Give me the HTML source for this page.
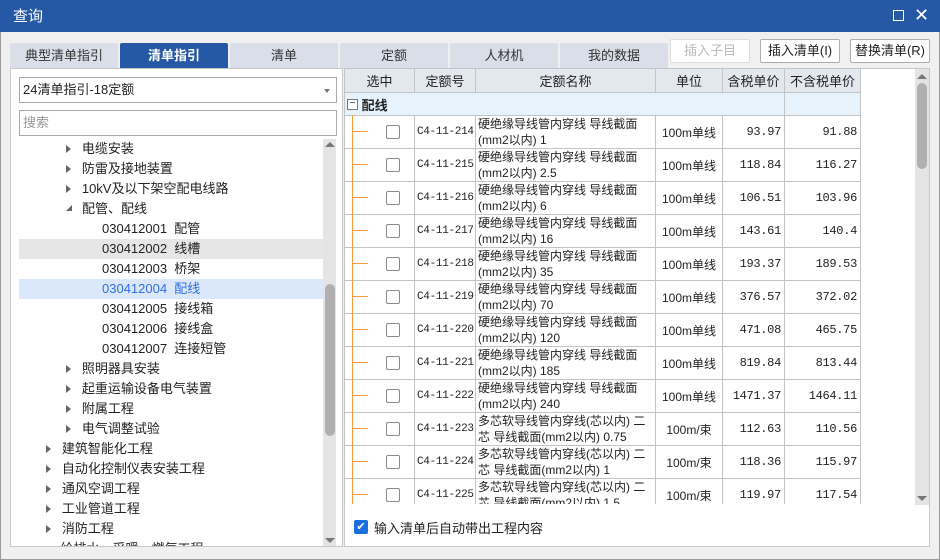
<!DOCTYPE html>
<html><head><meta charset="utf-8"><style>
*{margin:0;padding:0;box-sizing:border-box}
body{width:940px;height:560px;overflow:hidden;background:#f0f0f0;font-family:"Liberation Sans","Noto Sans CJK SC",sans-serif;font-size:13px;color:#222;position:relative}
.a{position:absolute}
.title{left:0;top:0;width:940px;height:32px;background:#2559a5;color:#fff;font-size:15px;line-height:34px;padding-left:13px}
.win{left:0;top:0;width:940px;height:560px;border:1px solid #9a9a9a}
.tab{top:43px;height:25px;width:108px;background:#d9dee8;text-align:center;line-height:26px;font-size:13px;color:#333;border-radius:2px 2px 0 0}
.tab.on{background:#2559a5;color:#fff;font-weight:bold}
.btn{top:39px;height:24px;background:#fff;border:1px solid #adadad;border-radius:2px;text-align:center;line-height:22px;font-size:13px;width:80px}
.tr{left:20px;width:303px;height:20px;line-height:20px;font-size:13px;white-space:nowrap}
.arr{display:inline-block;width:0;height:0;border-left:5px solid #666;border-top:4px solid transparent;border-bottom:4px solid transparent;vertical-align:middle;margin-top:-2px}
.mono{font-family:"Liberation Mono","Noto Sans CJK SC",monospace;font-size:11px;letter-spacing:-0.3px}
table{border-collapse:collapse;font-size:12px;table-layout:fixed}
td{border:1px solid #c4c4c4;height:33px;overflow:hidden;white-space:nowrap}
th{border:1px solid #c4c4c4;height:24px;background:#e3e8ef;font-weight:normal;font-size:13px}
.nm{line-height:16px;padding-left:2px;white-space:nowrap;vertical-align:middle}
.r{text-align:right;padding-right:3px}
.c{text-align:center}
.cb{display:inline-block;width:14px;height:14px;border:1px solid #8a8a8a;border-radius:2px;background:#fff}
</style></head><body>
<div class="a win"></div>
<div class="a title">查询</div>
<div class="a" style="left:893px;top:10px;width:11px;height:11px;border:1.5px solid #fff"></div>
<div class="a" style="left:914px;top:4px;color:#fff;font-size:18px;line-height:22px">✕</div>

<div class="a tab" style="left:10px">典型清单指引</div>
<div class="a tab on" style="left:120px">清单指引</div>
<div class="a tab" style="left:230px">清单</div>
<div class="a tab" style="left:340px">定额</div>
<div class="a tab" style="left:450px">人材机</div>
<div class="a tab" style="left:560px">我的数据</div>
<div class="a btn" style="left:670px;color:#bbb;border-color:#ddd">插入子目</div>
<div class="a btn" style="left:760px">插入清单(I)</div>
<div class="a btn" style="left:850px">替换清单(R)</div>

<!-- left panel -->
<div class="a" style="left:10px;top:68px;width:333px;height:479px;background:#fff;border:1px solid #c8c8c8"></div>
<div class="a" style="left:19px;top:77px;width:318px;height:26px;border:1px solid #a8a8a8;background:#fff;line-height:24px;padding-left:3px">24清单指引-18定额<span class="a" style="right:6px;top:11px;border-top:4px solid #777;border-left:3px solid transparent;border-right:3px solid transparent"></span></div>
<div class="a" style="left:19px;top:110px;width:318px;height:26px;border:1px solid #a8a8a8;background:#fff;line-height:24px;padding-left:3px;color:#999">搜索</div>
<div class="a" style="left:19px;top:239px;width:304px;height:20px;background:#e6e6e6"></div>
<div class="a" style="left:19px;top:279px;width:304px;height:20px;background:#dbe8fb"></div>
<div class="a tr" style="top:139px;padding-left:46px"><span class="arr"></span>&nbsp;&nbsp;&nbsp;电缆安装</div>
<div class="a tr" style="top:159px;padding-left:46px"><span class="arr"></span>&nbsp;&nbsp;&nbsp;防雷及接地装置</div>
<div class="a tr" style="top:179px;padding-left:46px"><span class="arr"></span>&nbsp;&nbsp;&nbsp;10kV及以下架空配电线路</div>
<div class="a tr" style="top:199px;padding-left:46px"><span class="a" style="left:46px;top:6px;border-right:6px solid #666;border-top:6px solid transparent"></span><span style="padding-left:16px">配管、配线</span></div>
<div class="a tr" style="top:219px;padding-left:82px">030412001&nbsp;&nbsp;配管</div>
<div class="a tr" style="top:239px;padding-left:82px">030412002&nbsp;&nbsp;线槽</div>
<div class="a tr" style="top:259px;padding-left:82px">030412003&nbsp;&nbsp;桥架</div>
<div class="a tr" style="top:279px;padding-left:82px;color:#2f6fe0">030412004&nbsp;&nbsp;配线</div>
<div class="a tr" style="top:299px;padding-left:82px">030412005&nbsp;&nbsp;接线箱</div>
<div class="a tr" style="top:319px;padding-left:82px">030412006&nbsp;&nbsp;接线盒</div>
<div class="a tr" style="top:339px;padding-left:82px">030412007&nbsp;&nbsp;连接短管</div>
<div class="a tr" style="top:359px;padding-left:46px"><span class="arr"></span>&nbsp;&nbsp;&nbsp;照明器具安装</div>
<div class="a tr" style="top:379px;padding-left:46px"><span class="arr"></span>&nbsp;&nbsp;&nbsp;起重运输设备电气装置</div>
<div class="a tr" style="top:399px;padding-left:46px"><span class="arr"></span>&nbsp;&nbsp;&nbsp;附属工程</div>
<div class="a tr" style="top:419px;padding-left:46px"><span class="arr"></span>&nbsp;&nbsp;&nbsp;电气调整试验</div>
<div class="a tr" style="top:439px;padding-left:26px"><span class="arr"></span>&nbsp;&nbsp;&nbsp;建筑智能化工程</div>
<div class="a tr" style="top:459px;padding-left:26px"><span class="arr"></span>&nbsp;&nbsp;&nbsp;自动化控制仪表安装工程</div>
<div class="a tr" style="top:479px;padding-left:26px"><span class="arr"></span>&nbsp;&nbsp;&nbsp;通风空调工程</div>
<div class="a tr" style="top:499px;padding-left:26px"><span class="arr"></span>&nbsp;&nbsp;&nbsp;工业管道工程</div>
<div class="a tr" style="top:519px;padding-left:26px"><span class="arr"></span>&nbsp;&nbsp;&nbsp;消防工程</div>
<div class="a" style="left:11px;top:539px;width:312px;height:7px;overflow:hidden"><div class="a tr" style="left:9px;top:0;padding-left:26px;height:14px;line-height:20px">&nbsp;&nbsp;&nbsp;&nbsp;给排水、采暖、燃气工程</div></div>
<div class="a" style="left:323px;top:139px;width:13px;height:407px;background:#e4e4e4"></div>
<div class="a" style="left:325px;top:284px;width:10px;height:152px;background:#b0b0b0;border-radius:5px"></div>
<div class="a" style="left:325px;top:142px;border-bottom:5px solid #777;border-left:5px solid transparent;border-right:5px solid transparent"></div>
<div class="a" style="left:325px;top:538px;border-top:5px solid #777;border-left:5px solid transparent;border-right:5px solid transparent"></div>

<!-- right panel -->
<div class="a" style="left:344px;top:68px;width:586px;height:479px;background:#fff;border:1px solid #c8c8c8"></div>
<div class="a" style="left:344px;top:68px;width:571px;height:436px;overflow:hidden">
<table style="width:516px">
<colgroup><col style="width:70px"><col style="width:61px"><col style="width:180px"><col style="width:67px"><col style="width:62px"><col style="width:76px"></colgroup>
<tr><th>选中</th><th>定额号</th><th>定额名称</th><th>单位</th><th>含税单价</th><th>不含税单价</th></tr>
<tr><td colspan="5" style="height:23px;background:#e6f3fd;border-right:1px solid #c4c4c4;font-weight:bold;font-size:13px;padding-left:2px"><span style="display:inline-block;width:11px;height:11px;border:1px solid #777;font-size:10px;line-height:8px;text-align:center;vertical-align:middle;margin-top:-3px;font-weight:normal;background:#fff">−</span> 配线</td><td style="height:23px;background:#e6f3fd"></td></tr>
<tbody id="b"></tbody>
</table>
<div id="ol"></div>
</div>
<div class="a" style="left:915px;top:69px;width:14px;height:436px;background:#e4e4e4"></div>
<div class="a" style="left:917px;top:83px;width:10px;height:86px;background:#b0b0b0;border-radius:5px"></div>
<div class="a" style="left:917px;top:74px;border-bottom:5px solid #777;border-left:5px solid transparent;border-right:5px solid transparent"></div>
<div class="a" style="left:917px;top:496px;border-top:5px solid #777;border-left:5px solid transparent;border-right:5px solid transparent"></div>
<div class="a" style="left:354px;top:520px;width:14px;height:14px;background:#1a6fe0;border-radius:2px;color:#fff;font-size:11px;line-height:14px;text-align:center">✔</div>
<div class="a" style="left:374px;top:518px;font-size:13px">输入清单后自动带出工程内容</div>

<script>
var d=[["214","硬绝缘导线管内穿线 导线截面","(mm2以内) 1","100m单线","93.97","91.88"],
["215","硬绝缘导线管内穿线 导线截面","(mm2以内) 2.5","100m单线","118.84","116.27"],
["216","硬绝缘导线管内穿线 导线截面","(mm2以内) 6","100m单线","106.51","103.96"],
["217","硬绝缘导线管内穿线 导线截面","(mm2以内) 16","100m单线","143.61","140.4"],
["218","硬绝缘导线管内穿线 导线截面","(mm2以内) 35","100m单线","193.37","189.53"],
["219","硬绝缘导线管内穿线 导线截面","(mm2以内) 70","100m单线","376.57","372.02"],
["220","硬绝缘导线管内穿线 导线截面","(mm2以内) 120","100m单线","471.08","465.75"],
["221","硬绝缘导线管内穿线 导线截面","(mm2以内) 185","100m单线","819.84","813.44"],
["222","硬绝缘导线管内穿线 导线截面","(mm2以内) 240","100m单线","1471.37","1464.11"],
["223","多芯软导线管内穿线(芯以内) 二","芯 导线截面(mm2以内) 0.75","100m/束","112.63","110.56"],
["224","多芯软导线管内穿线(芯以内) 二","芯 导线截面(mm2以内) 1","100m/束","118.36","115.97"],
["225","多芯软导线管内穿线(芯以内) 二","芯 导线截面(mm2以内) 1.5","100m/束","119.97","117.54"]];
var h="",o='<div class="a" style="left:8px;top:47px;width:1px;height:400px;background:#f39a3a"></div>';
d.forEach(function(r,i){h+='<tr><td><span class="cb" style="margin-left:41px;margin-top:3px"></span></td><td class="mono" style="padding-left:2px">C4-11-'+r[0]+'</td><td class="nm">'+r[1]+'<br>'+r[2]+'</td><td class="c">'+r[3]+'</td><td class="r mono" style="font-size:12px">'+r[4]+'</td><td class="r mono" style="font-size:12px">'+r[5]+'</td></tr>';
o+='<div class="a" style="left:9px;top:'+(63+33*i)+'px;width:15px;height:1px;background:#f39a3a"></div>';});
document.getElementById("b").innerHTML=h;
document.getElementById("ol").innerHTML=o;
</script>
</body></html>
